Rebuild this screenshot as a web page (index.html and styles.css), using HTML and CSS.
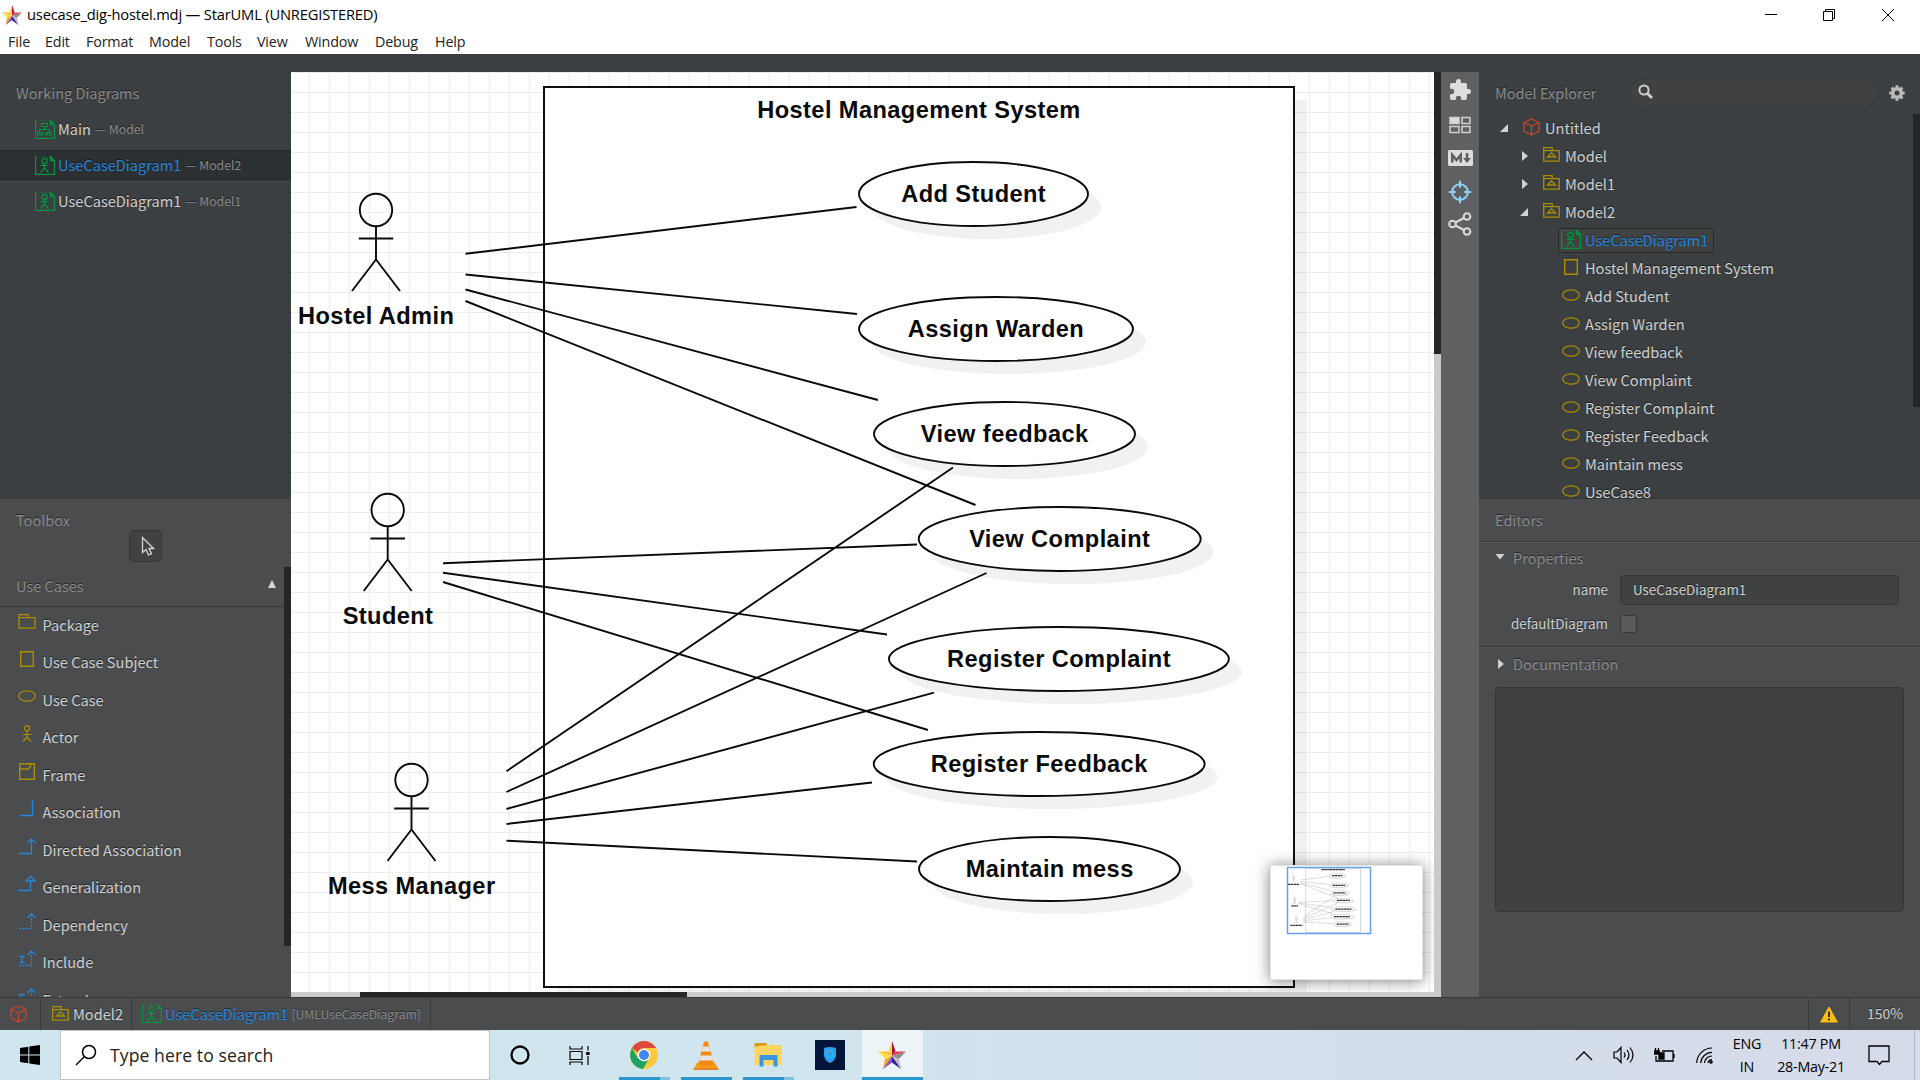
FILE: index.html
```html
<!DOCTYPE html>
<html lang="en">
<head>
<meta charset="utf-8">
<title>usecase_dig-hostel.mdj — StarUML (UNREGISTERED)</title>
<link rel="stylesheet" href="styles.css">
</head>
<body>
<svg class="defs" width="0" height="0">
  <symbol id="i-star" viewBox="0 0 28 28">
    <path fill="#ffd83a" d="M14 0 10.500 10 14 15z"/><path fill="#b0123f" d="M14 0v15l3.500-5z"/>
    <path fill="#fbc02d" d="M0 10.500h10.500L14 15z"/><path fill="#ffdf4a" d="M0 10.500 14 15 7 18z"/>
    <path fill="#e53950" d="M28 10.500H17.500L14 15z"/><path fill="#8d8d8d" d="M28 10.500 14 15l7 3z"/>
    <path fill="#f7a81b" d="M5 28l2-10 7-3z"/><path fill="#7e57c2" d="M5 28l9-13v6.500z"/>
    <path fill="#311b92" d="M23 28l-9-6.500V15z"/><path fill="#bdbdbd" d="M23 28l-2-10-7-3z"/>
  </symbol>
  <symbol id="i-ucd" viewBox="0 0 20 19">
    <g fill="none" stroke="#00963f" stroke-width="1.200"><path d="M.6 0v18.300h18.800V5"/><path d="M1 .5h14" stroke-opacity=".25"/><path d="M15.500 0v4.500h4L15.500.5z" stroke-width="1.300"/>
    <circle cx="9.500" cy="5" r="2.600"/><path d="M9.500 7.600v4.400M5.500 9.500h8M9.500 12l-4 4.500M9.500 12l4 4.500"/></g>
  </symbol>
  <symbol id="i-main" viewBox="0 0 20 19">
    <g fill="none" stroke="#00963f" stroke-width="1.200"><path d="M.6 0v18.300h18.800V5"/><path d="M1 .5h14" stroke-opacity=".25"/><path d="M15.500 0v4.500h4L15.500.5z" stroke-width="1.300"/>
    <path d="M6.500 3.500h6v3h-6zM9.500 6.500v3M4.500 12.500v-3h10v3M2.500 12.500h4.500v2.500H2.500zM11.500 12.500h4.500v2.500h-4.500zM7 14h4.500"/></g>
  </symbol>
  <symbol id="i-model" viewBox="0 0 17 15"><path fill="none" stroke="#a98f00" stroke-width="1.300" d="M.7.700h8.500v3h7v10.500H.7zM.7 3.700h9M4.500 10h8L8.500 6z"/></symbol>
  <symbol id="i-package" viewBox="0 0 18 15"><path fill="none" stroke="#a98f00" stroke-width="1.300" d="M1 .700h9v3h7v10.500H1zM1 3.700h9"/></symbol>
  <symbol id="i-subject" viewBox="0 0 14 16"><path fill="none" stroke="#a98f00" stroke-width="1.400" d="M.7.700h12.600v14.600H.7z"/></symbol>
  <symbol id="i-usecase" viewBox="0 0 18 12"><ellipse cx="9" cy="6" rx="8.300" ry="5.200" fill="none" stroke="#a98f00" stroke-width="1.300"/></symbol>
  <symbol id="i-actor" viewBox="0 0 10 17"><g fill="none" stroke="#a98f00" stroke-width="1.200"><circle cx="5" cy="3.300" r="2.600"/><path d="M5 6v6M.500 9.500h9M5 12 1 16.500M5 12l4 4.500"/></g></symbol>
  <symbol id="i-frame" viewBox="0 0 16 17"><path fill="none" stroke="#a98f00" stroke-width="1.400" d="M.7.700h14.600v15.600H.7zM.7 6h8.500L11.500 3.500V1"/></symbol>
  <symbol id="i-cube" viewBox="0 0 17 18"><path fill="none" stroke="#c8472b" stroke-width="1.300" stroke-linejoin="round" d="M8.500 1 16 4.500v8.500L8.500 17 1 13V4.500zM1 4.500 8.500 8 16 4.500M8.500 8v9"/></symbol>
  <symbol id="i-gear" viewBox="0 0 16 16"><circle cx="8" cy="8" r="4.300" fill="none" stroke="#b9babb" stroke-width="3.600"/><g stroke="#b9babb" stroke-width="3"><path d="M8 .3v3M8 12.700v3M.3 8h3M12.700 8h3M2.600 2.600l2 2M11.400 11.400l2 2M13.400 2.600l-2 2M4.600 11.400l-2 2"/></g></symbol>
</svg>

<header class="titlebar">
  <svg class="app-icon"><use href="#i-star"/></svg>
  <h1 class="title">usecase_dig-hostel.mdj — StarUML (UNREGISTERED)</h1>
  <svg class="win-buttons" width="132" height="14" viewBox="0 0 132 14" fill="none" stroke="#000"><path d="M0 6.500h12M58.500 3.500h9v9h-9zM60.500 3.500v-2h9v9h-2M117 1l12 12M129 1l-12 12"/></svg>
</header>
<nav class="menubar">
  <span>File</span><span>Edit</span><span>Format</span><span>Model</span><span>Tools</span><span>View</span><span>Window</span><span>Debug</span><span>Help</span>
</nav>

<main class="workspace">
  <aside class="left">
    <section class="working">
      <h2 class="panel-title">Working Diagrams</h2>
      <ul class="diagrams">
        <li><svg class="ic-doc"><use href="#i-main"/></svg><span>Main</span><small>— Model</small></li>
        <li class="current"><svg class="ic-doc"><use href="#i-ucd"/></svg><span>UseCaseDiagram1</span><small>— Model2</small></li>
        <li><svg class="ic-doc"><use href="#i-ucd"/></svg><span>UseCaseDiagram1</span><small>— Model1</small></li>
      </ul>
    </section>
    <section class="toolbox">
      <h2 class="panel-title">Toolbox</h2>
      <button class="select-tool"><svg width="14" height="20" viewBox="0 0 14 20"><path d="M1.500 1.500v15l3.500-3 2.500 5.500 3-1.300-2.500-5.200h4.500z" fill="none" stroke="#d6d6d6" stroke-width="1.300"/></svg></button>
      <div class="tool-scroll">
        <div class="tools">
          <h3 class="group"><span>Use Cases</span><i class="tri-up"></i></h3>
          <div class="tool"><span class="tic"><svg width="18" height="15"><use href="#i-package"/></svg></span>Package</div>
          <div class="tool"><span class="tic"><svg width="14" height="16"><use href="#i-subject"/></svg></span>Use Case Subject</div>
          <div class="tool"><span class="tic"><svg width="18" height="12"><use href="#i-usecase"/></svg></span>Use Case</div>
          <div class="tool"><span class="tic"><svg width="10" height="17"><use href="#i-actor"/></svg></span>Actor</div>
          <div class="tool"><span class="tic"><svg width="16" height="17"><use href="#i-frame"/></svg></span>Frame</div>
          <div class="tool"><span class="tic"><svg class="rel" width="18" height="17"><path d="M2 15.500h12.500V0"/></svg></span>Association</div>
          <div class="tool"><span class="tic"><svg class="rel" width="18" height="17"><path d="M1 15.500h12.500V1M9.500 5l4-4 4 4"/></svg></span>Directed Association</div>
          <div class="tool"><span class="tic"><svg class="rel" width="18" height="17"><path d="M0 15.500h12.500V6M8 6l4.500-4.500L17.500 6z"/></svg></span>Generalization</div>
          <div class="tool"><span class="tic"><svg class="rel" width="18" height="17"><path stroke-dasharray="2 1.500" d="M1 15.500h12.500V2"/><path d="M9.500 5l4-4 4 4"/></svg></span>Dependency</div>
          <div class="tool"><span class="tic"><svg class="rel" width="18" height="17"><path stroke-dasharray="2 1.500" d="M1 15.500h12.500V2"/><path d="M9.500 5l4-4 4 4M1.500 6.500h5M1.500 12.500h5M4 6.500v6"/></svg></span>Include</div>
          <div class="tool"><span class="tic"><svg class="rel" width="18" height="17"><path stroke-dasharray="2 1.500" d="M1 15.500h12.500V2"/><path d="M9.500 5l4-4 4 4M6.500 6.500H2v6h4.500M2 9.500h4"/></svg></span>Extend</div>
        </div>
        <div class="bar"><i class="thumb-tools"></i></div>
      </div>
    </section>
  </aside>

  <section class="editor">
    <div class="canvas">
      <svg class="diagram" width="1143" height="920" viewBox="291 72 1143 920">
        <defs>
          <pattern id="grid" x="309" y="92" width="20" height="20" patternUnits="userSpaceOnUse"><path d="M.5 0v20M0 .5h20" stroke="#eee" stroke-width="1"/></pattern>
          <g id="person" fill="none" stroke="#0a0a0a" stroke-width="1.900"><circle cy="210" r="16.200"/><path d="M0 226v33.500M-17.300 238.500h34.600M-24 291 0 259.500 24 291"/></g>
        </defs>
        <rect x="291" y="72" width="1143" height="920" fill="url(#grid)"/>
        <g id="shapes">
          <rect x="557" y="100" width="750" height="900" fill="#000" fill-opacity=".055"/>
          <rect x="544" y="87" width="750" height="900" fill="#fff" stroke="#0f0f0f" stroke-width="2"/>
          <g fill="#f1f1f1">
            <ellipse cx="986.500" cy="207" rx="114.500" ry="32"/><ellipse cx="1009" cy="342" rx="137" ry="32"/><ellipse cx="1017.500" cy="447" rx="130.500" ry="32"/><ellipse cx="1072.500" cy="552" rx="141" ry="32"/><ellipse cx="1071.500" cy="672" rx="170" ry="32"/><ellipse cx="1052" cy="777" rx="165.500" ry="32"/><ellipse cx="1062.500" cy="882" rx="130.500" ry="32"/>
          </g>
          <g fill="#fff" stroke="#0a0a0a" stroke-width="1.900">
            <ellipse cx="973.500" cy="194" rx="114.500" ry="32"/><ellipse cx="996" cy="329" rx="137" ry="32"/><ellipse cx="1004.500" cy="434" rx="130.500" ry="32"/><ellipse cx="1059.700" cy="539" rx="141" ry="32"/><ellipse cx="1058.900" cy="659" rx="170" ry="32"/><ellipse cx="1039.200" cy="764" rx="165.500" ry="32"/><ellipse cx="1049.500" cy="869" rx="130.500" ry="32"/>
          </g>
          <use href="#person" x="376"/><use href="#person" x="387.700" y="300"/><use href="#person" x="411.500" y="570"/>
          <path fill="none" stroke="#0a0a0a" stroke-width="1.900" d="M465.500 253.800 856.500 207M465.500 274.500 857 314M465.500 289.500 878 400M465.500 301 975.500 505M443 563.200 917 544.500M443 572.700 887 634.500M443 582 928 730M506.500 771.200 953 467.500M506.500 792 986.500 573M506.500 809 934 692.700M506.500 824 872 782.500M506.500 840.700 917 861.500"/>
        </g>
        <g class="labels">
          <text x="919" y="118">Hostel Management System</text>
          <text x="973.700" y="202">Add Student</text><text x="996" y="337">Assign Warden</text><text x="1004.700" y="442">View feedback</text><text x="1059.700" y="547">View Complaint</text><text x="1059" y="667">Register Complaint</text><text x="1039.200" y="772">Register Feedback</text><text x="1049.700" y="877">Maintain mess</text>
          <text x="376.200" y="324">Hostel Admin</text><text x="388" y="624">Student</text><text x="411.700" y="894">Mess Manager</text>
        </g>
      </svg>
      <div class="minimap">
        <svg width="153" height="115" viewBox="1270 865 153 115">
          <g transform="translate(1266.400 861.800) scale(.0727 .0717)"><use href="#shapes"/>
            <g stroke="#111" stroke-opacity=".85" stroke-width="17" stroke-dasharray="34 5"><path d="M757 110h323M901 194h145M910 329h174M922 434h166M970 539h180M948 659h222M932 764h216M966 869h168M298 316h156M343 616h90M328 886h168"/></g>
          </g>
          <rect x="1287.500" y="867.500" width="83" height="66" fill="none" stroke="#64a2f0" stroke-width="1.500"/>
        </svg>
      </div>
    </div>
    <div class="vbar"><i></i></div>
    <div class="hbar"><i></i></div>
  </section>

  <aside class="strip">
    <svg width="24" height="24" viewBox="0 0 24 24" fill="#dcddde"><path d="M20.500 11H19V7a2 2 0 0 0-2-2h-4V3.500a2.500 2.500 0 0 0-5 0V5H4a2 2 0 0 0-2 2v3.800h1.500a2.700 2.700 0 0 1 0 5.400H2V20a2 2 0 0 0 2 2h3.800v-1.500a2.700 2.700 0 0 1 5.400 0V22H17a2 2 0 0 0 2-2v-4h1.500a2.500 2.500 0 0 0 0-5z"/></svg>
    <svg width="24" height="18" viewBox="0 0 24 18" fill="none" stroke="#d0d1d2" stroke-width="1.500"><path fill="#dcddde" d="M2 1.500h9v6H2z"/><path d="M14 1.500h8v6h-8zM2 10.500h9v6H2zM14 10.500h8v6h-8z"/></svg>
    <svg width="25" height="16" viewBox="0 0 25 16"><rect width="25" height="16" rx="1.500" fill="#dcddde"/><path fill="none" stroke="#5f6062" stroke-width="2.600" d="M4.300 12.500V5L8.500 10l4.200-5v7.500M19 3v6"/><path fill="#5f6062" d="M15 8h8l-4 5z"/></svg>
    <svg width="24" height="24" viewBox="0 0 24 24" fill="none" stroke="#8fd3f5" stroke-width="2"><circle cx="12" cy="12" r="7.800"/><path d="M12 .800v7M12 16.200v7M.800 12h7M16.200 12h7"/></svg>
    <svg width="24" height="24" viewBox="0 0 24 24" fill="none" stroke="#dcddde" stroke-width="2"><circle cx="4.500" cy="12" r="3.300"/><circle cx="19" cy="4.500" r="3.300"/><circle cx="19" cy="19.500" r="3.300"/><path d="M7.500 10.500 16 6M7.500 13.500 16 18"/></svg>
  </aside>

  <aside class="right">
    <section class="explorer">
      <div class="explorer-head">
        <h2 class="panel-title">Model Explorer</h2>
        <div class="search"><svg width="16" height="16" viewBox="0 0 16 16" fill="none" stroke="#cfcfcf"><circle cx="6" cy="6" r="4.600" stroke-width="2"/><path d="M9.500 9.500 14 14" stroke-width="2.800"/></svg></div>
        <svg class="gear" width="16" height="16"><use href="#i-gear"/></svg>
      </div>
      <div class="tree-wrap">
        <ul class="tree">
          <li class="l0"><i class="open"></i><svg width="17" height="18"><use href="#i-cube"/></svg>Untitled</li>
          <li class="l1"><i class="closed"></i><svg width="17" height="15"><use href="#i-model"/></svg>Model</li>
          <li class="l1"><i class="closed"></i><svg width="17" height="15"><use href="#i-model"/></svg>Model1</li>
          <li class="l1"><i class="open"></i><svg width="17" height="15"><use href="#i-model"/></svg>Model2</li>
          <li class="l2"><span class="picked"><svg width="20" height="19"><use href="#i-ucd"/></svg>UseCaseDiagram1</span></li>
          <li class="l2"><svg width="18" height="16"><use href="#i-subject"/></svg>Hostel Management System</li>
          <li class="l2"><svg width="18" height="12"><use href="#i-usecase"/></svg>Add Student</li>
          <li class="l2"><svg width="18" height="12"><use href="#i-usecase"/></svg>Assign Warden</li>
          <li class="l2"><svg width="18" height="12"><use href="#i-usecase"/></svg>View feedback</li>
          <li class="l2"><svg width="18" height="12"><use href="#i-usecase"/></svg>View Complaint</li>
          <li class="l2"><svg width="18" height="12"><use href="#i-usecase"/></svg>Register Complaint</li>
          <li class="l2"><svg width="18" height="12"><use href="#i-usecase"/></svg>Register Feedback</li>
          <li class="l2"><svg width="18" height="12"><use href="#i-usecase"/></svg>Maintain mess</li>
          <li class="l2"><svg width="18" height="12"><use href="#i-usecase"/></svg>UseCase8</li>
        </ul>
        <div class="bar"><i class="thumb-tree"></i></div>
      </div>
    </section>
    <section class="editors">
      <h2 class="panel-title editors-title">Editors</h2>
      <div class="props">
        <h3 class="fold"><i class="tri-down"></i>Properties</h3>
        <div class="field name"><label>name</label><div class="input">UseCaseDiagram1</div></div>
        <div class="field flag"><label>defaultDiagram</label><div class="check"></div></div>
      </div>
      <div class="docs">
        <h3 class="fold"><i class="tri-right"></i>Documentation</h3>
        <div class="doc-text"></div>
      </div>
    </section>
  </aside>
</main>

<footer class="status">
  <div class="crumb root"><svg width="17" height="18"><use href="#i-cube"/></svg></div>
  <div class="crumb mid"><svg width="17" height="15"><use href="#i-model"/></svg><span>Model2</span></div>
  <div class="crumb leaf"><svg width="20" height="19"><use href="#i-ucd"/></svg><b>UseCaseDiagram1</b><small>[UMLUseCaseDiagram]</small></div>
  <div class="warn"><svg width="18" height="17" viewBox="0 0 18 17"><path fill="#fdbc0b" stroke="#fdbc0b" stroke-linejoin="round" d="M9 1 17.300 16H.7z"/><path stroke="#333" stroke-width="2" d="M9 5.500v5.500M9 12.500v2"/></svg></div>
  <div class="zoom">150%</div>
</footer>

<footer class="taskbar">
  <div class="start"><svg width="20" height="20" viewBox="0 0 20 20"><path d="M0 3 8.300 1.800v7.700H0zM9.300 1.600 20 0v9.500H9.300zM0 10.500h8.300v7.700L0 17zM9.300 10.500H20V20L9.300 18.400z"/></svg></div>
  <div class="find"><svg width="22" height="22" viewBox="0 0 22 22" fill="none" stroke="#000" stroke-width="1.500"><circle cx="14" cy="8" r="6.500"/><path d="M9.500 12.500 1 21"/></svg><span>Type here to search</span></div>
  <div class="task ring"><svg width="20" height="20" viewBox="0 0 20 20"><circle cx="10" cy="10" r="8.500" fill="none" stroke="#000" stroke-width="2.300"/></svg></div>
  <div class="task view"><svg width="21" height="19" viewBox="0 0 21 19" fill="none" stroke="#000" stroke-width="1.200"><path d="M1 0v3h12V0M1 5.500h12v8H1zM1 19v-3h12v3M19 0v4.500M19 10v9"/><path fill="#000" d="M17.800 6.500h2.200v2h-2.200z"/></svg></div>
  <div class="task run two"><svg width="28" height="28" viewBox="0 0 28 28"><circle cx="14" cy="14" r="14" fill="#fbc93d"/><path fill="#dd4b3e" d="M2 6.900A14 14 0 0 1 26.200 7H14a7 7 0 0 0-6.200 4.500z"/><path fill="#1ea362" d="M2 6.900A14 14 0 0 0 13 28l5.500-9.500L8 17.500z"/><circle cx="14" cy="14" r="6.300" fill="#fff"/><circle cx="14" cy="14" r="5" fill="#4285f4"/></svg></div>
  <div class="task run"><svg width="26" height="29" viewBox="0 0 26 29"><path fill="#f79a1a" d="M4 22h18l3.500 6.500H.5z"/><path fill="#d9701a" d="M.5 27.500h25v1.200H.5z"/><path fill="#f28a12" d="M11 1q2-1.500 4 0l6 22q-8 3-16 0z"/><path fill="#e4e4e4" d="M10 5.500h6l1.500 5h-9zM7.300 14.500h11.400l1.600 5H5.800z"/></svg></div>
  <div class="task run two"><svg width="28" height="24" viewBox="0 0 28 24"><path fill="#d89b12" d="M.5 1q0-1 1-1H12l1.500 2v3H.5z"/><path fill="#ffd561" d="M.5 3.500 14 2h13.500v20H.5z"/><path fill="#3c96dc" d="M5.500 12h18v11.500h-4V17h-10v6.500h-4z"/></svg></div>
  <div class="task"><svg width="30" height="30" viewBox="0 0 30 30"><path fill="#03163a" d="M0 0h30v30H0z"/><path fill="#2b9cf0" d="M9 8q6-2 12 0v8q-1 5-6 7-5-2-6-7z"/><circle cx="15" cy="14" r="3.300" fill="none" stroke="#24c4d8" stroke-width="1.300"/><path d="M12 13a3.300 3.300 0 0 1 3-2.300" fill="none" stroke="#d86a8a"/></svg></div>
  <div class="task run active"><svg width="28" height="28"><use href="#i-star"/></svg></div>
  <div class="tray">
    <svg class="chev" width="18" height="11" viewBox="0 0 18 11" fill="none" stroke="#000" stroke-width="1.400"><path d="M1 10 9 2l8 8"/></svg>
    <svg width="22" height="18" viewBox="0 0 22 18" fill="none" stroke="#000" stroke-width="1.200"><path d="M1 6h3l4-4.500v15L4 12H1zM11 6.500q2 2.500 0 5M14 4q4 5 0 10M17 1.500q6 7.500 0 15"/></svg>
    <svg width="21" height="15" viewBox="0 0 21 15" fill="none" stroke="#000" stroke-width="1.300"><path d="M8 3h11v10H2V8M20 6v4M1.500 0v3M4.500 0v3"/><path fill="#000" d="M.700 3h4.600v3H.7zM5 5h5v6H5z"/></svg>
    <svg width="17" height="17" viewBox="0 0 17 17" fill="none" stroke="#000" stroke-width="1.200"><path d="M.700 16A15.500 15.500 0 0 1 16 1M4.700 16A11.500 11.500 0 0 1 16 5.300M8.500 16A7.500 7.500 0 0 1 16 9M12 16a4 4 0 0 1 4-3.500"/><circle cx="15" cy="15" r="1.200" fill="#000"/></svg>
    <div class="two-line lang"><span>ENG</span><span>IN</span></div>
    <div class="two-line clock"><span>11:47 PM</span><span>28-May-21</span></div>
    <svg class="note" width="22" height="21" viewBox="0 0 22 21" fill="none" stroke="#000" stroke-width="1.300"><path d="M1 1h20v15.500h-7L11.500 19.500 9 16.500H1z"/></svg>
    <i class="peek"></i>
  </div>
</footer>
</body>
</html>
```
FILE: styles.css
```css
* { box-sizing: border-box; }
html, body { margin: 0; height: 100%; overflow: hidden; }
body {
  width: 1920px; height: 1080px; display: flex; flex-direction: column; background: #fff;
  font: 14.6px/20px "Noto Sans CJK SC", "Noto Sans", sans-serif; color: #cfd1d2;
}
h1, h2, h3, ul { margin: 0; padding: 0; font-weight: 400; font-size: inherit; list-style: none; }
svg { display: block; flex: none; }
.defs { position: absolute; }

.titlebar, .menubar, .taskbar { font-family: "Open Sans", "Noto Sans", sans-serif; color: #000; }
.titlebar { height: 30px; display: flex; align-items: center; padding: 0 23px 1px 2px; flex: none; }
.app-icon { width: 20px; height: 20px; }
.title { margin-left: 5px; padding-bottom: 2px; font-size: 14.7px; letter-spacing: -.17px; flex: 1; white-space: nowrap; }
.menubar { height: 24px; flex: none; display: grid; grid-template-columns: 37px 41px 63px 58px 50px 48px 70px 60px 50px; padding-left: 8px; font-size: 14.3px; letter-spacing: -.15px; line-height: 23px; color: #222; }

.workspace { height: 943px; flex: none; display: grid; grid-template-columns: 291px 1150px 38px 441px; background: #3b3f41; }
.left, .right { display: flex; flex-direction: column; text-shadow: 0 -1px 0 rgba(0,0,0,.55); min-width: 0; }
.panel-title { color: #8a8b8c; line-height: 20px; font-size: 14.5px; }

.working { height: 445px; flex: none; padding-top: 29px; }
.working .panel-title { padding-left: 16px; }
.diagrams { padding-top: 11px; display: grid; gap: 4px; }
.diagrams li { height: 32px; padding: 0 0 2px 35px; display: flex; align-items: center; white-space: nowrap; }
.diagrams span { margin-left: 3px; }
.diagrams small { margin-left: 4px; font-size: 12.3px; color: #8a8b8c; }
.diagrams .current { background: #2d3033; border-top: 1px solid #25282a; border-bottom: 1px solid #464a4d; }
.current span, .leaf b, .picked { color: #2587dd; font-weight: 400; }
.ic-doc { width: 20px; height: 19px; }

.toolbox, .editors { background: #4b4c4e; flex: 1; min-height: 0; }
.toolbox { display: flex; flex-direction: column; }
.toolbox > .panel-title { padding: 11px 0 0 16px; height: 31px; }
.select-tool { align-self: center; width: 33px; height: 32px; margin: 0; border: 1px solid #343535; border-radius: 5px; background: #404241; padding: 0 0 1px 11px; display: flex; align-items: center; }
.tool-scroll { margin-top: 5px; flex: 1; min-height: 0; display: flex; overflow: hidden; }
.tools { width: 284px; margin-bottom: -20px; }
.group { height: 40px; margin-bottom: -1px; border-bottom: 1px solid #38393a; display: flex; justify-content: space-between; padding: 9px 8px 0 16px; color: #8a8b8c; font-size: 14.5px; }
.tri-up { margin-top: 4px; width: 8px; height: 8px; background: #d6d6d6; clip-path: polygon(50% 0, 100% 100%, 0 100%); }
.tool { height: 37.5px; display: flex; align-items: center; padding-left: 17px; white-space: nowrap; }
.tic { width: 19px; margin-right: 6.5px; display: flex; justify-content: center; padding-bottom: 7px; }
.rel { fill: none; stroke: #2388d9; stroke-width: 1.3; }
.bar { width: 7px; flex: none; }
.bar i { display: block; background: #262626; }
.thumb-tools { height: 379px; }
.thumb-tree { height: 293px; }

.editor { display: grid; grid-template: 920px 5px / 1143px 7px; padding-top: 18px; }
.canvas { background: #fff; position: relative; overflow: hidden; }
.labels text { font: 700 23.6px "Liberation Sans", Arial, sans-serif; letter-spacing: .42px; text-anchor: middle; fill: #0a0a0a; }
.minimap { position: absolute; left: 979px; top: 793px; width: 153px; height: 115px; background: #fff; box-shadow: 0 1px 14px rgba(0,0,0,.5), inset 0 0 0 1px #e4e4e4; }
.vbar { background: #cacaca; grid-row: 1 / 3; grid-column: 2; }
.vbar i { display: block; height: 282px; background: #262626; }
.hbar { background: #cacaca; grid-row: 2; padding-left: 69px; }
.hbar i { display: block; width: 327px; height: 5px; background: #262626; }

.strip { background: #5f6062; margin-top: 18px; display: flex; flex-direction: column; align-items: center; padding-top: 6px; }
.strip svg:nth-child(2) { margin-top: 14px; }
.strip svg:nth-child(3) { margin-top: 16px; }
.strip svg:nth-child(4) { margin-top: 14px; }
.strip svg:nth-child(5) { margin-top: 8px; }

.explorer { height: 445px; flex: none; display: flex; flex-direction: column; overflow: hidden; border-bottom: 1px solid #33373a; }
.explorer-head { height: 60px; flex: none; display: flex; align-items: flex-start; padding: 24px 15px 0 16px; }
.explorer-head .panel-title { width: 135px; padding-top: 5px; }
.search { width: 246px; height: 28px; border-radius: 14px; background: #404241; padding: 5px 0 0 8px; border-top: 1px solid #333637; }
.gear { margin: 7px 0 0 13px; }
.tree-wrap { display: flex; flex: 1; min-height: 0; }
.tree { width: 434px; }
.tree li { height: 28px; display: flex; align-items: center; white-space: nowrap; }
.tree svg { margin-right: 5px; margin-bottom: 3px; }
.tree .l0 { padding-left: 21px; }
.tree .l1 { padding-left: 41px; }
.tree .l2 { padding-left: 83px; }
.tree i { width: 8px; height: 8px; background: #d0d1d1; clip-path: polygon(100% 0, 100% 100%, 0 100%); margin-right: 15px; }
.tree i.closed { width: 6px; height: 10px; clip-path: polygon(0 0, 100% 50%, 0 100%); margin: 0 15px 0 2px; }
.tree .l0 svg { margin-bottom: 2px; }
.picked { height: 25px; margin-left: -4px; padding: 0 5px 0 2px; display: flex; align-items: center; border: 1px solid #272a2b; border-radius: 3px; background: #404241; }
.tree .picked svg { margin: 0 4px 1px 0; }

.editors-title { height: 42px; padding: 11px 0 0 16px; }
.props, .docs { border-top: 1px solid #3a3b3c; box-shadow: inset 0 1px 0 #58595b; }
.props { height: 105px; padding: 6px 21px 0 16px; }
.docs { padding: 7px 16px 0; }
.fold { display: flex; align-items: center; color: #8a8b8c; height: 20px; font-size: 14.5px; }
.tri-down { width: 10px; height: 6px; background: #cfd0d0; clip-path: polygon(0 0, 100% 0, 50% 100%); margin-right: 8px; margin-bottom: 3px; }
.tri-right { width: 6px; height: 10px; background: #cfd0d0; clip-path: polygon(0 0, 100% 50%, 0 100%); margin: 0 9px 0 3px; }
.field { display: flex; align-items: center; font-size: 13.4px; }
.field label { width: 113px; margin-right: 12px; text-align: right; padding-bottom: 3px; }
.name { margin-top: 7px; }
.input { width: 279px; height: 30px; border: 1px solid #343635; border-radius: 4px; background: #404241; padding: 3px 12px; }
.flag { margin-top: 8px; }
.check { width: 17px; height: 18px; border: 1px solid #373838; border-radius: 3px; background: #595b5a; margin-bottom: 2px; }
.doc-text { margin-top: 13px; height: 225px; border: 1px solid #343635; border-radius: 4px; background: #404241; }

.status { height: 33px; flex: none; background: #4b4c4e; border-top: 1px solid #38393b; display: flex; padding-top: 1px; text-shadow: 0 -1px 0 rgba(0,0,0,.5); white-space: nowrap; }
.crumb { border-right: 1px solid #393a3c; display: flex; align-items: center; padding-bottom: 2px; }
.root { width: 41px; padding-left: 10px; }
.mid { width: 91px; padding-left: 11px; gap: 4px; }
.leaf { width: 299px; padding-left: 10px; gap: 3px; }
.leaf small { font-size: 12.2px; color: #8a8b8c; }
.warn { margin-left: auto; width: 42px; border: solid #393a3c; border-width: 0 1px; display: flex; align-items: center; justify-content: center; padding-bottom: 1px; }
.zoom { width: 70px; text-align: center; line-height: 29px; font-size: 14px; }

.taskbar { height: 50px; flex: none; display: flex; background: linear-gradient(90deg, #cfe6ee 0, #d0e5ee 45%, #d2dfec 62%, #d6dbe9 100%); }
.start { width: 60px; padding: 15px 0 0 20px; }
.find { width: 430px; background: #fff; border: 1px solid #c4c4c4; display: flex; align-items: center; padding-left: 14px; font-size: 17.6px; color: #222; }
.find span { margin-left: 13px; letter-spacing: .08px; }
.task { width: 62px; display: flex; align-items: center; justify-content: center; }
.task.ring { width: 61px; }
.task svg { margin-right: 1px; }
.task.view svg { margin-right: 5px; }
.task.run { background: linear-gradient(#2b95cc, #2b95cc) 6px bottom / 51px 3px no-repeat; }
.task.two { background: linear-gradient(90deg, #2b95cc 41px, #7fbfe0 41px) 6px bottom / 51px 3px no-repeat; }
.task.active { background: linear-gradient(#2b95cc, #2b95cc) 1px bottom / 61px 3px no-repeat, linear-gradient(#ecf4f8, #ecf4f8) 1px 0 / 61px 50px no-repeat; }
.tray { margin-left: auto; width: 345px; display: grid; grid-template-columns: 38px 41px 42px 27px 48px 80px 63px 6px; align-items: center; }
.two-line { display: flex; flex-direction: column; align-items: center; line-height: 23px; font-size: 14.3px; letter-spacing: -.25px; white-space: nowrap; }
.note { margin-left: 17px; }
.peek { width: 1px; height: 50px; background: #aeb7c2; }
```
